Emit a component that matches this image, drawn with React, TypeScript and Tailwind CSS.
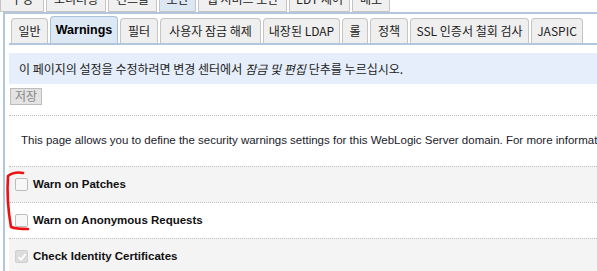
import React from 'react';

const topTabs = [
  { label: '구성', w: 'w-[44px]' },
  { label: '모니터링', w: 'w-[60px]' },
  { label: '컨트롤', w: 'w-[49px]' },
  { label: '보안', w: 'w-[37px]', active: true },
  { label: '웹 서비스 보안', w: 'w-[89px]' },
  { label: 'EDT 제어', w: 'w-[61px]' },
  { label: '배포', w: 'w-[38px]' },
];

const subTabs = [
  { label: '일반', w: 'w-[37px]' },
  { label: 'Warnings', w: 'w-[68px]', active: true },
  { label: '필터', w: 'w-[38px]' },
  { label: '사용자 잠금 해제', w: 'w-[101px]' },
  { label: '내장된 LDAP', w: 'w-[77px]' },
  { label: '롤', w: 'w-[26px]' },
  { label: '정책', w: 'w-[38px]' },
  { label: 'SSL 인증서 철회 검사', w: 'w-[119px]' },
  { label: 'JASPIC', w: 'w-[52px]' },
];

const rows = [
  { label: 'Warn on Patches', checked: false, shaded: true },
  { label: 'Warn on Anonymous Requests', checked: false, shaded: false },
  { label: 'Check Identity Certificates', checked: true, shaded: true, disabled: true },
];

const font = "font-['Liberation_Sans','Noto_Sans_CJK_KR',sans-serif]";
const krFont = "font-['Noto_Sans_CJK_KR','Liberation_Sans',sans-serif]";

const Checkbox: React.FC<{ checked: boolean; disabled?: boolean }> = ({ checked, disabled }) => (
  <div
    className={`w-[13px] h-[13px] rounded-[2px] border flex items-center justify-center ${
      disabled ? 'border-[#cfcfcf] bg-[#dcdcdc]' : 'border-[#bdbdbd] bg-[#f7f7f7]'
    }`}
  >
    {checked && (
      <svg width="10" height="10" viewBox="0 0 10 10">
        <path d="M1.5 5.2 L4 7.6 L8.6 2.2" fill="none" stroke="#ffffff" strokeWidth="1.8" />
      </svg>
    )}
  </div>
);

export default function App() {
  return (
    <div className={`relative w-[597px] h-[271px] overflow-hidden bg-white ${font}`}>
      {/* top level tabs, mostly cut off */}
      <div className="flex gap-[2px] mt-[-14px] h-[26px]">
        {topTabs.map((t) => (
          <div
            key={t.label}
            className={`${t.w} h-[26px] shrink-0 border border-[#c4c4c4] rounded-t-[3px] flex items-center justify-center text-[12px] text-[#222] ${krFont} ${
              t.active ? 'bg-[#dbe7f2]' : 'bg-[#f0f0f0]'
            }`}
          >
            {t.label}
          </div>
        ))}
      </div>

      <div className="border-t-2 border-l-2 border-[#b3c7dc] ml-[3px] pl-[4px] pt-[3px] h-[260px]">
        {/* second level tabs */}
        <div className="flex items-end gap-[2px] border-b-2 border-[#b3c7dc] pl-[2px] h-[28px]">
          {subTabs.map((t) => (
            <div
              key={t.label}
              className={`${t.w} shrink-0 border border-b-0 rounded-t-[4px] flex items-center justify-center whitespace-nowrap ${
                t.active
                  ? 'h-[27px] bg-[#dce8f4] border-[#a9c1d9] font-bold text-[12.5px] text-black ' + font
                  : 'h-[25px] bg-[#efefef] border-[#c4c4c4] text-[12px] text-[#222] ' + krFont
              }`}
            >
              {t.label}
            </div>
          ))}
        </div>

        {/* info box */}
        <div
          className={`mt-[8px] h-[31px] bg-[#e5eefa] flex items-center pl-[10px] text-[12px] text-[#222] whitespace-nowrap ${krFont}`}
        >
          이 페이지의 설정을 수정하려면 변경 센터에서 <i className="mx-[3px]">잠금 및 편집</i> 단추를 누르십시오.
        </div>

        <button
          className={`mt-[3px] ml-[1px] h-[17px] w-[32px] border border-[#bcbcbc] bg-[#e3e3e3] text-[12px] text-[#888] leading-none ${krFont}`}
        >
          저장
        </button>

        <div className="mt-[7px] border-t border-dotted border-[#bdbdbd]" />

        <div className="h-[50px] flex items-center pl-[12px] text-[11.5px] text-[#1a1a2a] whitespace-nowrap">
          This page allows you to define the security warnings settings for this WebLogic Server domain. For more
          information, see the online help.
        </div>

        {rows.map((r) => (
          <div
            key={r.label}
            className={`h-[36px] border-t border-dotted border-[#bdbdbd] flex items-center gap-[5px] pl-[6px] ${
              r.shaded ? 'bg-[#f4f4f4]' : 'bg-white'
            }`}
          >
            <Checkbox checked={r.checked} disabled={r.disabled} />
            <span className="text-[11.5px] font-bold text-[#111]">{r.label}</span>
          </div>
        ))}
      </div>

      {/* red pen annotation */}
      <svg className="absolute left-0 top-0 pointer-events-none" width="40" height="240" viewBox="0 0 40 240">
        <path
          d="M23 173 C18 172 12 173 8 176 C7 190 8 210 11 227 C16 229 22 229 28 229"
          fill="none"
          stroke="#ee1111"
          strokeWidth="2.6"
          strokeLinecap="round"
          strokeLinejoin="round"
        />
      </svg>
    </div>
  );
}
